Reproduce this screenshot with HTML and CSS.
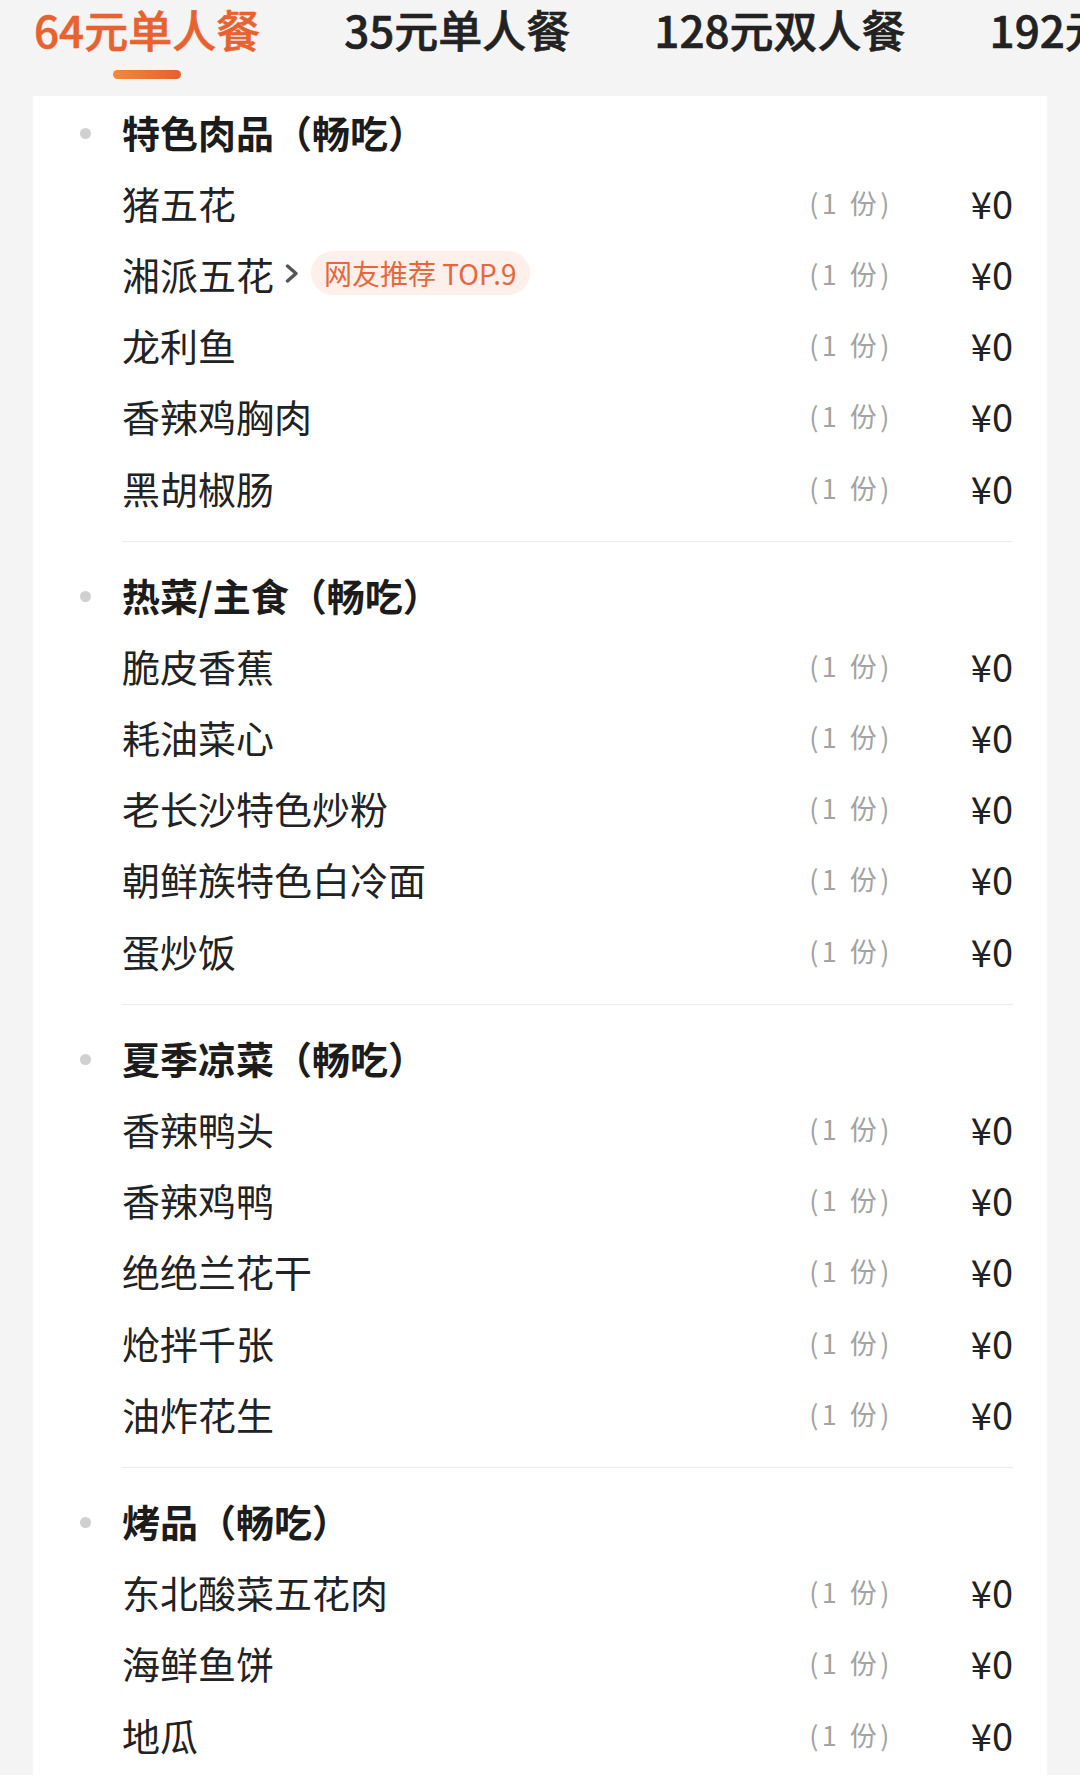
FILE: index.html
```html
<!DOCTYPE html>
<html lang="zh-CN">
<head>
  <meta charset="UTF-8">
  <meta name="viewport" content="width=device-width, initial-scale=1.0">
  <title>套餐详情</title>
  <link rel="stylesheet" href="styles.css">
</head>
<body>
  <!-- 套餐标签 -->
  <div class="tabs">
    <div class="tab active">
      <span class="tab-text">64元单人餐</span>
      <span class="tab-bar"></span>
    </div>
    <div class="tab"><span class="tab-text">35元单人餐</span></div>
    <div class="tab"><span class="tab-text">128元双人餐</span></div>
    <div class="tab"><span class="tab-text">192元</span></div>
  </div>

  <div class="card">
    <!-- 特色肉品 -->
    <div class="section first">
      <div class="section-title"><span class="dot"></span>特色肉品（畅吃）</div>
      <div class="row"><div class="name">猪五花</div><div class="qty">(1 份)</div><div class="price">¥0</div></div>
      <div class="row">
        <div class="name">湘派五花
          <svg class="chevron" width="14" height="19" viewBox="0 0 14 19"><polyline points="2.5,2 11,9.5 2.5,17" fill="none" stroke="#555" stroke-width="3.4" stroke-linecap="round" stroke-linejoin="round"/></svg>
          <span class="badge">网友推荐 TOP.9</span>
        </div>
        <div class="qty">(1 份)</div><div class="price">¥0</div>
      </div>
      <div class="row"><div class="name">龙利鱼</div><div class="qty">(1 份)</div><div class="price">¥0</div></div>
      <div class="row"><div class="name">香辣鸡胸肉</div><div class="qty">(1 份)</div><div class="price">¥0</div></div>
      <div class="row"><div class="name">黑胡椒肠</div><div class="qty">(1 份)</div><div class="price">¥0</div></div>
    </div>

    <!-- 热菜/主食 -->
    <div class="section">
      <div class="section-title"><span class="dot"></span>热菜/主食（畅吃）</div>
      <div class="row"><div class="name">脆皮香蕉</div><div class="qty">(1 份)</div><div class="price">¥0</div></div>
      <div class="row"><div class="name">耗油菜心</div><div class="qty">(1 份)</div><div class="price">¥0</div></div>
      <div class="row"><div class="name">老长沙特色炒粉</div><div class="qty">(1 份)</div><div class="price">¥0</div></div>
      <div class="row"><div class="name">朝鲜族特色白冷面</div><div class="qty">(1 份)</div><div class="price">¥0</div></div>
      <div class="row"><div class="name">蛋炒饭</div><div class="qty">(1 份)</div><div class="price">¥0</div></div>
    </div>

    <!-- 夏季凉菜 -->
    <div class="section">
      <div class="section-title"><span class="dot"></span>夏季凉菜（畅吃）</div>
      <div class="row"><div class="name">香辣鸭头</div><div class="qty">(1 份)</div><div class="price">¥0</div></div>
      <div class="row"><div class="name">香辣鸡鸭</div><div class="qty">(1 份)</div><div class="price">¥0</div></div>
      <div class="row"><div class="name">绝绝兰花干</div><div class="qty">(1 份)</div><div class="price">¥0</div></div>
      <div class="row"><div class="name">炝拌千张</div><div class="qty">(1 份)</div><div class="price">¥0</div></div>
      <div class="row"><div class="name">油炸花生</div><div class="qty">(1 份)</div><div class="price">¥0</div></div>
    </div>

    <!-- 烤品 -->
    <div class="section">
      <div class="section-title"><span class="dot"></span>烤品（畅吃）</div>
      <div class="row"><div class="name">东北酸菜五花肉</div><div class="qty">(1 份)</div><div class="price">¥0</div></div>
      <div class="row"><div class="name">海鲜鱼饼</div><div class="qty">(1 份)</div><div class="price">¥0</div></div>
      <div class="row"><div class="name">地瓜</div><div class="qty">(1 份)</div><div class="price">¥0</div></div>
    </div>
  </div>
</body>
</html>
```

FILE: styles.css
```css
body {
  margin: 0;
  padding: 0;
  background: #f4f4f4;
  color: #222;
  font-family: "Noto Sans CJK SC", "Noto Sans", sans-serif;
  height: 1775px;
  overflow: hidden;
}

/* 顶部标签 */
.tabs {
  display: flex;
  gap: 84px;
  height: 96px;
  padding-left: 34px;
  white-space: nowrap;
}

.tab {
  display: flex;
  flex-direction: column;
  align-items: center;
  flex-shrink: 0;
}

.tab-text {
  font-size: 44px;
  line-height: 64px;
  margin-top: -3px;
  font-weight: 500;
  color: #222;
  -webkit-text-stroke: 0.6px currentColor;
}

.tab.active .tab-text {
  color: #e8622f;
}

.tab-bar {
  display: block;
  width: 68px;
  height: 9px;
  margin-top: 9px;
  border-radius: 5px;
  background: linear-gradient(90deg, #f08a3a, #e85f2c);
}

/* 菜品卡片 */
.card {
  margin: 0 33px;
  background: #fff;
  padding: 0 34px 0 89px;
  height: 1700px;
}

.section {
  padding: 19px 0 16px;
  border-bottom: 1px solid #ebebeb;
}

.section.first {
  padding-top: 2px;
}

.section-title {
  display: flex;
  align-items: center;
  box-sizing: border-box;
  height: 71.2px;
  padding-bottom: 5px;
  margin-left: -89px;
  font-size: 38px;
  font-weight: 700;
  color: #1c1c1c;
}

.dot {
  width: 11px;
  height: 11px;
  border-radius: 50%;
  background: #d0d0d0;
  margin-top: 5px;
  margin-left: 47px;
  margin-right: 31px;
  flex-shrink: 0;
}

.row {
  display: flex;
  align-items: center;
  box-sizing: border-box;
  height: 71.2px;
  padding-bottom: 5px;
}

.name {
  flex: 1;
  display: flex;
  align-items: center;
  font-size: 38px;
  color: #222;
}

.chevron {
  margin-left: 11px;
}

.badge {
  margin-left: 12px;
  padding: 0 13px;
  height: 44px;
  line-height: 44px;
  border-radius: 22px;
  background: #fdefe9;
  color: #e4683f;
  font-size: 28px;
}

.qty {
  font-size: 27px;
  color: #a3a3a3;
  letter-spacing: 3.5px;
}

.price {
  width: 120px;
  text-align: right;
  font-size: 38px;
  color: #222;
}
```
